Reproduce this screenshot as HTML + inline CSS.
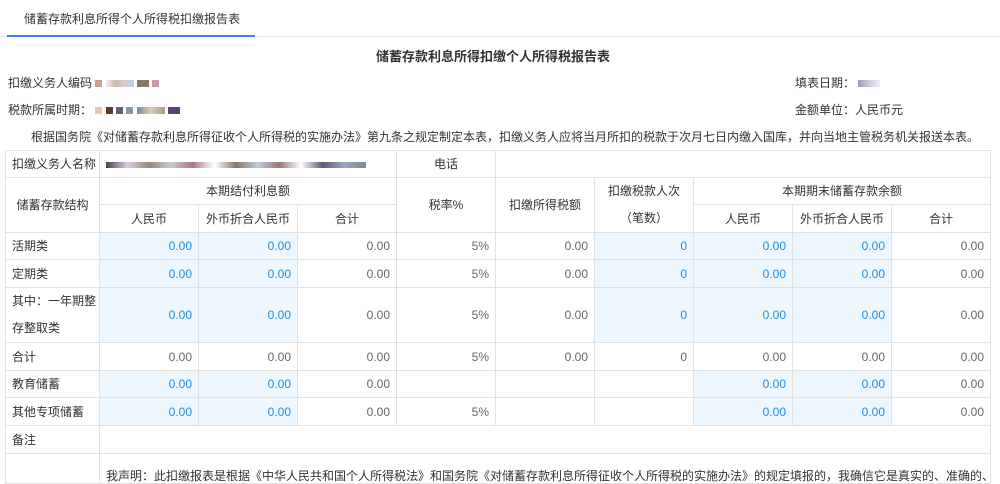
<!DOCTYPE html>
<html><head><meta charset="utf-8"><style>
*{margin:0;padding:0;box-sizing:border-box}
body{width:1000px;height:464px;overflow:hidden;background:#fff;font-family:"Liberation Sans","Noto Sans CJK SC",sans-serif;font-size:12px;color:#333;position:relative}
.a{position:absolute;white-space:nowrap}
.px{display:inline-block;width:7px;height:7px;vertical-align:middle}
table{position:absolute;left:5px;top:150px;width:985px;border-collapse:collapse;table-layout:fixed}
td{border:1px solid #e2e2e2;font-size:12px;line-height:14px;padding:0 6px;text-align:right;color:#666;white-space:nowrap;overflow:hidden}
td.l{text-align:left;color:#333}
td.c{text-align:center;color:#333}
td.b{background:#eef6fe;color:#1e8fe6}
</style></head><body>
<div class="a" style="left:24px;top:10px;font-size:12px;color:#333">储蓄存款利息所得个人所得税扣缴报告表</div>
<div class="a" style="left:0;top:36px;width:1000px;height:1px;background:#e6e6e6"></div>
<div class="a" style="left:7px;top:35px;width:248px;height:2px;background:#3a86e8"></div>
<div class="a" style="left:376px;top:46px;font-size:13px;font-weight:bold;color:#333">储蓄存款利息所得扣缴个人所得税报告表</div>
<div class="a" style="left:8px;top:74px">扣缴义务人编码 <span class="px" style="background:#c9a090"></span> <span class="px" style="width:28px;background:linear-gradient(90deg,#eee,#cba,#dcc,#bce)"></span> <span class="px" style="background:#876;width:12px"></span> <span class="px" style="background:#c9a"></span></div>
<div class="a" style="left:8px;top:101px">税款所属时期： <span class="px" style="background:#e5c9a8"></span> <span class="px" style="background:#5a3a30"></span> <span class="px" style="background:#567"></span> <span class="px" style="background:#89a"></span> <span class="px" style="width:28px;background:linear-gradient(90deg,#789,#dcb,#a98)"></span> <span class="px" style="width:12px;background:#547"></span></div>
<div class="a" style="left:795px;top:74px">填表日期： <span class="px" style="width:22px;background:linear-gradient(90deg,#99a,#ccd,#eef)"></span></div>
<div class="a" style="left:795px;top:101px">金额单位：人民币元</div>
<div class="a" style="left:31px;top:128px">根据国务院《对储蓄存款利息所得征收个人所得税的实施办法》第九条之规定制定本表，扣缴义务人应将当月所扣的税款于次月七日内缴入国库，并向当地主管税务机关报送本表。</div>
<table>
<colgroup><col style="width:94px"><col style="width:99px"><col style="width:99px"><col style="width:99px"><col style="width:99px"><col style="width:99px"><col style="width:99px"><col style="width:99px"><col style="width:99px"><col style="width:99px"></colgroup>
<tr style="height:27px"><td class="l">扣缴义务人名称</td><td colspan="3" class="l"><span class="px" style="width:260px;height:6px;background:linear-gradient(90deg,#445,#dcd,#987,#ccc,#a78,#fff,#876,#bcd,#977,#fff,#657,#9ab,#789)"></span></td><td class="c">电话</td><td colspan="5"></td></tr>
<tr style="height:27px"><td rowspan="2" class="c">储蓄存款结构</td><td colspan="3" class="c">本期结付利息额</td><td rowspan="2" class="c">税率%</td><td rowspan="2" class="c">扣缴所得税额</td><td rowspan="2" class="c" style="line-height:27px">扣缴税款人次<br>（笔数）</td><td colspan="3" class="c">本期期末储蓄存款余额</td></tr>
<tr style="height:28px"><td class="c">人民币</td><td class="c">外币折合人民币</td><td class="c">合计</td><td class="c">人民币</td><td class="c">外币折合人民币</td><td class="c">合计</td></tr>
<tr style="height:27px"><td class="l">活期类</td><td class="b">0.00</td><td class="b">0.00</td><td>0.00</td><td>5%</td><td>0.00</td><td class="b">0</td><td class="b">0.00</td><td class="b">0.00</td><td>0.00</td></tr>
<tr style="height:28px"><td class="l">定期类</td><td class="b">0.00</td><td class="b">0.00</td><td>0.00</td><td>5%</td><td>0.00</td><td class="b">0</td><td class="b">0.00</td><td class="b">0.00</td><td>0.00</td></tr>
<tr style="height:54px"><td class="l" style="line-height:27px">其中：一年期整<br>存整取类</td><td class="b">0.00</td><td class="b">0.00</td><td>0.00</td><td>5%</td><td>0.00</td><td class="b">0</td><td class="b">0.00</td><td class="b">0.00</td><td>0.00</td></tr>
<tr style="height:28px"><td class="l">合计</td><td>0.00</td><td>0.00</td><td>0.00</td><td>5%</td><td>0.00</td><td>0</td><td>0.00</td><td>0.00</td><td>0.00</td></tr>
<tr style="height:27px"><td class="l">教育储蓄</td><td class="b">0.00</td><td class="b">0.00</td><td>0.00</td><td></td><td></td><td></td><td class="b">0.00</td><td class="b">0.00</td><td>0.00</td></tr>
<tr style="height:28px"><td class="l">其他专项储蓄</td><td class="b">0.00</td><td class="b">0.00</td><td>0.00</td><td>5%</td><td></td><td></td><td class="b">0.00</td><td class="b">0.00</td><td>0.00</td></tr>
<tr style="height:28px"><td class="l">备注</td><td colspan="9"></td></tr>
<tr style="height:30px"><td></td><td colspan="9" class="l" style="vertical-align:bottom">我声明：此扣缴报表是根据《中华人民共和国个人所得税法》和国务院《对储蓄存款利息所得征收个人所得税的实施办法》的规定填报的，我确信它是真实的、准确的、完</td></tr>
</table>
</body></html>
